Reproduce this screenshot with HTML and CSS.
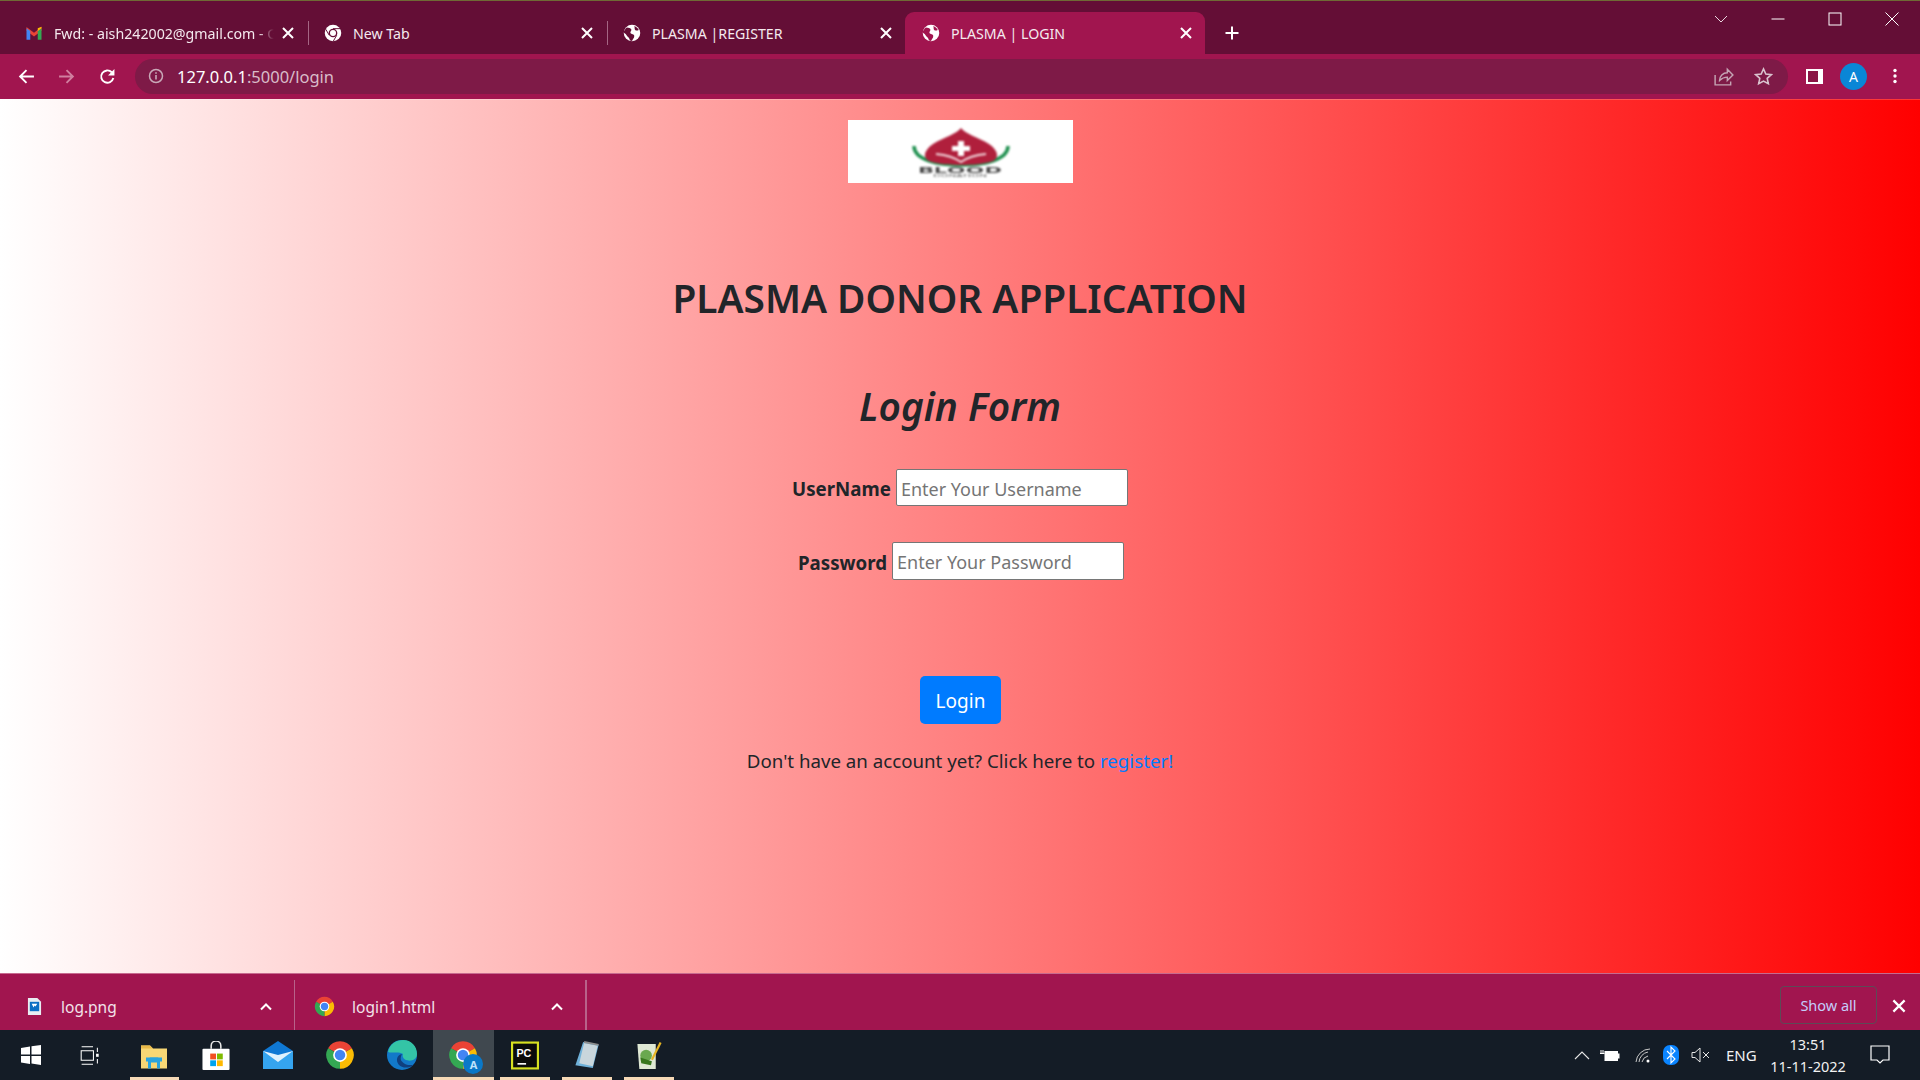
FILE: index.html
```html
<!DOCTYPE html>
<html lang="en">
<head>
<meta charset="utf-8">
<title>PLASMA | LOGIN</title>
<link rel="stylesheet" href="styles.css">
</head>
<body>
<svg class="sprite" width="0" height="0" aria-hidden="true">
  <symbol id="globe" viewBox="0 0 24 24"><circle cx="12" cy="12" r="11" fill="#fff"/><path d="M5 4.500c3 .5 5 .5 6 2.500 1 2-2 3-1 5s5 1 5 4-2 4-3 6.500c-2 0-3-1-3.500-3s-3-3-4-5-3-2-3.500-3.500S3.500 6 5 4.500zM15 2.500c3 1 5 3 6 5.500-2 1-4 1-5-.5s0-3-1-5z" fill="#640e36"/></symbol>
  <symbol id="globea" viewBox="0 0 24 24"><circle cx="12" cy="12" r="11" fill="#fff"/><path d="M5 4.500c3 .5 5 .5 6 2.500 1 2-2 3-1 5s5 1 5 4-2 4-3 6.500c-2 0-3-1-3.500-3s-3-3-4-5-3-2-3.500-3.500S3.500 6 5 4.500zM15 2.500c3 1 5 3 6 5.500-2 1-4 1-5-.5s0-3-1-5z" fill="#a1154f"/></symbol>
  <symbol id="chrome" viewBox="0 0 24 24"><path d="M12 12 2.470 6.500A11 11 0 0 1 21.530 6.500z" fill="#ea4335"/><path d="M12 12 21.530 6.500A11 11 0 0 1 12 23z" fill="#fbbc04"/><path d="M12 12 12 23A11 11 0 0 1 2.470 6.500z" fill="#34a853"/><circle cx="12" cy="12" r="5.500" fill="#fff"/><circle cx="12" cy="12" r="4.200" fill="#4285f4"/></symbol>
  <symbol id="chromewhite" viewBox="0 0 24 24"><circle cx="12" cy="12" r="11" fill="#fff"/><circle cx="12" cy="12" r="5.800" fill="#640e36"/><circle cx="12" cy="12" r="4" fill="#fff"/><path d="M12 6.200h9.500M7 15l-4.700-8M17 15l-5 8.500" stroke="#640e36" stroke-width="1.300"/></symbol>
  <symbol id="x" viewBox="0 0 16 16"><path d="M3 3l10 10M13 3L3 13" stroke="#fff" stroke-width="2" fill="none"/></symbol>
  <symbol id="up" viewBox="0 0 16 16"><path d="M3 10.500l5-5 5 5" stroke="#fff" stroke-width="2" fill="none"/></symbol>
</svg>

<div class="screen">
  <header class="tabstrip">
    <div class="tab">
      <svg class="fav" viewBox="0 0 24 24"><path d="M2 4l10 7.500L22 4v5l-10 7.500L2 9z" fill="#ea4335"/><path d="M2 21V5.500l5 3.800V21z" fill="#4285f4"/><path d="M17 21V9.300l5-3.800V21z" fill="#34a853"/><path d="M17 9.300l5-3.800V3.500l-5 2z" fill="#fbbc04"/></svg>
      <span class="tabtitle fade">Fwd: - aish242002@gmail.com - G</span>
      <svg class="tabx"><use href="#x"/></svg>
      <i class="tabsep"></i>
    </div>
    <div class="tab">
      <svg class="fav"><use href="#chromewhite"/></svg>
      <span class="tabtitle">New Tab</span>
      <svg class="tabx"><use href="#x"/></svg>
      <i class="tabsep"></i>
    </div>
    <div class="tab">
      <svg class="fav"><use href="#globe"/></svg>
      <span class="tabtitle">PLASMA |REGISTER</span>
      <svg class="tabx"><use href="#x"/></svg>
    </div>
    <div class="tab active">
      <svg class="fav"><use href="#globea"/></svg>
      <span class="tabtitle">PLASMA | LOGIN</span>
      <svg class="tabx"><use href="#x"/></svg>
    </div>
    <svg class="newtab" viewBox="0 0 16 16"><path d="M8 1.500v13M1.500 8h13" stroke="#fff" stroke-width="2"/></svg>
    <div class="winctl">
      <svg class="wc" viewBox="0 0 16 16"><path d="M2 5l6 6 6-6" stroke="#e9d6df" stroke-width="1" fill="none"/></svg>
      <svg class="wc" viewBox="0 0 16 16"><path d="M1.500 8h13" stroke="#fff" stroke-width="1"/></svg>
      <svg class="wc" viewBox="0 0 16 16"><rect x="2" y="2" width="12" height="12" stroke="#fff" stroke-width="1" fill="none"/></svg>
      <svg class="wc" viewBox="0 0 16 16"><path d="M1.500 1.500l13 13M14.500 1.500l-13 13" stroke="#fff" stroke-width="1" fill="none"/></svg>
    </div>
  </header>

  <nav class="toolbar">
    <svg class="tb back" viewBox="0 0 16 16"><path d="M15 8H2M8 2L2 8l6 6" stroke="#fff" stroke-width="1.800" fill="none"/></svg>
    <svg class="tb fwd" viewBox="0 0 16 16"><path d="M1 8h13M8 2l6 6-6 6" stroke="#d07f9f" stroke-width="1.800" fill="none"/></svg>
    <svg class="tb reload" viewBox="0 0 16 16"><path d="M13.500 9.500A5.800 5.800 0 1 1 12 4" stroke="#fff" stroke-width="1.800" fill="none"/><path d="M14.500 1v6h-6z" fill="#fff"/></svg>
    <div class="omnibox">
      <svg class="info" viewBox="0 0 16 16"><circle cx="8" cy="8" r="6.500" stroke="#c9a9b8" stroke-width="1.500" fill="none"/><path d="M8 7v4.500M8 4.300v1.500" stroke="#c9a9b8" stroke-width="1.600"/></svg>
      <span class="url"><b>127.0.0.1</b>:5000/login</span>
      <svg class="tb share" viewBox="0 0 18 18"><path d="M1 8v9h14v-3" stroke="#c4a3b3" stroke-width="1.300" fill="none"/><path d="M5 13c0-4 3-7 7-7V3l5 5-5 5v-3c-3 0-5 1-7 3z" stroke="#c4a3b3" stroke-width="1.300" fill="none"/></svg>
      <svg class="tb star" viewBox="0 0 18 18"><path d="M9 1.800l2.200 4.800 5.200.6-3.900 3.500 1.100 5.200L9 13.300l-4.600 2.600 1.100-5.200L1.600 7.200l5.200-.6z" stroke="#d9c3ce" stroke-width="1.500" fill="none"/></svg>
    </div>
    <div class="panel"></div>
    <div class="avatar">A</div>
    <svg class="dots" viewBox="0 0 4 16"><circle cx="2" cy="2.500" r="1.700" fill="#fff"/><circle cx="2" cy="8" r="1.700" fill="#fff"/><circle cx="2" cy="13.500" r="1.700" fill="#fff"/></svg>
  </nav>

  <main class="page">
    <div class="logo">
      <svg class="logomark" viewBox="0 0 225 63">
        <path d="M66 26C66 40 90 45 113 45S160 40 160 26" stroke="#1d8f4e" stroke-width="3.500" fill="none"/>
        <path d="M113 8C117 14 130 17 141 24 151 31 151 38 145 41 135 44.500 125 45 113 45S91 44.500 81 41C75 38 75 31 85 24 96 17 109 14 113 8z" fill="#b01f3c"/>
        <path d="M110 21h6v5h6v5h-6v5h-6v-5h-6v-5h6z" fill="#fff"/>
        <path d="M88 34c10 1 18 3 25 8 7-5 15-7 25-8" stroke="#f3d9de" stroke-width="2" fill="none"/>
        <text class="logotext" x="70" y="52.500" textLength="84" lengthAdjust="spacingAndGlyphs">BLOOD</text>
        <text class="logosub" x="85" y="56.500" textLength="54" lengthAdjust="spacingAndGlyphs">DONATION</text>
      </svg>
    </div>
    <h1 class="title">PLASMA DONOR APPLICATION</h1>
    <h2 class="subtitle">Login Form</h2>
    <form class="form">
      <div class="row"><label class="lbl" for="u">UserName</label><input class="field" id="u" type="text" placeholder="Enter Your Username"></div>
      <div class="row row-pass"><label class="lbl" for="p">Password</label><input class="field" id="p" type="text" placeholder="Enter Your Password"></div>
      <button class="btn" type="button">Login</button>
    </form>
    <p class="foot">Don't have an account yet? Click here to <a class="reg" href="#">register!</a></p>
  </main>

  <section class="downloads">
    <div class="dl">
      <svg class="dlicon" viewBox="0 0 16 20"><path d="M1 1h10l4 4v14H1z" fill="#e8edf2"/><rect x="3" y="5" width="10" height="10" fill="#0d6fc4"/><path d="M5 7h6l-2 3-1-1-1 2z" fill="#fff"/></svg>
      <span class="dlname">log.png</span>
      <svg class="dlup"><use href="#up"/></svg>
    </div>
    <div class="dl">
      <svg class="dlicon wide"><use href="#chrome"/></svg>
      <span class="dlname">login1.html</span>
      <svg class="dlup"><use href="#up"/></svg>
    </div>
    <button class="showall" type="button">Show all</button>
    <svg class="dlx"><use href="#x"/></svg>
  </section>

  <footer class="taskbar">
    <div class="tk"><svg class="tki win" viewBox="0 0 24 24"><path d="M2 5l9-1.500V11.500H2zM12.500 3.300L22 2v9.500h-9.500zM2 13h9v8L2 19.500zM12.500 13H22v9l-9.500-1.500z" fill="#fff"/></svg></div>
    <div class="tk view"><svg class="tki tv" viewBox="0 0 24 24"><path d="M3 2h13M3 22h13M2.500 6.500h14v11h-14zM21 3v5M21 16v5" stroke="#fff" stroke-width="1.200" fill="none"/><rect x="19.500" y="10" width="3" height="3.500" fill="#fff"/></svg></div>
    <div class="tk on"><svg class="tki" viewBox="0 0 28 28"><path d="M1 4h9l3 3h14v20H1z" fill="#f8d775"/><path d="M1 4h9l3 3H1z" fill="#e9b949"/><path d="M8 27v-9l2-2h8l2 2v9h-3v-6h-6v6z" fill="#29a4e0"/><rect x="6" y="16" width="16" height="4" fill="#29a4e0"/></svg></div>
    <div class="tk"><svg class="tki" viewBox="0 0 28 30"><path d="M9 8V5a5 5 0 0 1 10 0v3" stroke="#e8e8e8" stroke-width="1.600" fill="none"/><rect x="0" y="8" width="28" height="22" rx="1" fill="#fff"/><rect x="8" y="13" width="6" height="6" fill="#f25022"/><rect x="15" y="13" width="6" height="6" fill="#7fba00"/><rect x="8" y="20" width="6" height="6" fill="#00a4ef"/><rect x="15" y="20" width="6" height="6" fill="#ffb900"/></svg></div>
    <div class="tk"><svg class="tki big" viewBox="0 0 30 28"><path d="M0 10L15 0l15 10v18H0z" fill="#0f78d4"/><path d="M0 10l15 10 15-10v18H0z" fill="#35a4ef"/><path d="M0 10l15 11L30 10 15 14z" fill="#dff1fd"/></svg></div>
    <div class="tk"><svg class="tki big"><use href="#chrome"/></svg></div>
    <div class="tk"><svg class="tki big" viewBox="0 0 28 28"><circle cx="14" cy="14" r="14" fill="#1279c9"/><path d="M1 11C3 3 9 0 15 0c8 0 13 6 13 13 0 5-5 7-9 6-4-1-5-4-4-6-5-3-11 0-14-2z" fill="#34c4a6"/><path d="M14 13c-5 1-6 6-3 10 3 3 9 4 14 0-4 1-9 0-11-3-2-2-1-5 0-7z" fill="#10407f"/></svg></div>
    <div class="tk on active"><span class="chromea"><svg class="tki big"><use href="#chrome"/></svg><span class="badge">A</span></span></div>
    <div class="tk on"><svg class="tki" viewBox="0 0 26 26"><rect x="1" y="1" width="24" height="24" fill="#0b0b0b" stroke="#d7e021" stroke-width="2"/><rect x="6" y="20" width="8" height="1.500" fill="#fff"/><text class="pc" x="5" y="14">PC</text></svg></div>
    <div class="tk on"><svg class="tki" viewBox="0 0 26 30"><path d="M9 1l16 3-6 24L1 25z" fill="#6fb1d9"/><path d="M10 2l14 3-5 21L5 23z" fill="#c9d6dc"/><path d="M10 1l15 3" stroke="#8d8d8d" stroke-width="2"/></svg></div>
    <div class="tk on"><svg class="tki" viewBox="0 0 26 30"><path d="M1 3h19v26H3z" fill="#dfe8d4"/><circle cx="10" cy="15" r="6" fill="#6aa84f"/><path d="M4 17l12 4-1 4-10-2z" fill="#38761d"/><path d="M24 1l2 1-9 18-2-1z" fill="#e6b422"/></svg></div>
    <div class="tray">
      <svg class="ti chev" viewBox="0 0 16 16"><path d="M1 12l7-7 7 7" stroke="#e6e6e6" stroke-width="1.100" fill="none"/></svg>
      <svg class="ti batt" viewBox="0 0 20 14"><rect x="4.500" y="3" width="13.500" height="10" fill="#fff"/><rect x="18" y="5.500" width="1.500" height="5" fill="#fff"/><path d="M0 5.500h4.500M1 2v3.500M3 2v3.500" stroke="#fff"/></svg>
      <svg class="ti wifi" viewBox="0 0 16 16"><path d="M1 15a14 14 0 0 1 14-13M4 15a11 11 0 0 1 9-10M7 15a8 8 0 0 1 6-6" stroke="#c9c9c9" stroke-width="1" fill="none"/><circle cx="13" cy="14" r="1.500" fill="#fff"/></svg>
      <svg class="ti bt" viewBox="0 0 16 20"><rect width="16" height="20" rx="7" fill="#0a84ff"/><path d="M4 6l8 8-4 4V2l4 4-8 8" stroke="#fff" stroke-width="1.100" fill="none"/></svg>
      <svg class="ti spk" viewBox="0 0 20 16"><path d="M1 5.500h3L9 1v14L4 10.500H1z" stroke="#e6e6e6" fill="none"/><path d="M12 5l6 6M18 5l-6 6" stroke="#e6e6e6"/></svg>
      <span class="eng">ENG</span>
      <div class="clock"><span>13:51</span><span>11-11-2022</span></div>
      <svg class="ti note" viewBox="0 0 20 20"><path d="M1 1h18v14h-6l-3 3-3-3H1z" stroke="#fff" stroke-width="1.200" fill="none"/></svg>
    </div>
  </footer>
</div>
</body>
</html>
```

FILE: styles.css
```css
* { box-sizing: border-box; }
html, body { margin: 0; height: 100%; overflow: hidden; }
body { font-family: "Noto Sans", "Open Sans", "Liberation Sans", sans-serif; }
.sprite { position: absolute; }
.screen { width: 1920px; height: 1080px; display: flex; flex-direction: column; }

/* tab strip */
.tabstrip { height: 54px; background: #640e36; border-top: 1px solid #6f6a35; padding-left: 8px; display: flex; align-items: flex-end; color: #fff; }
.tab { width: 299px; height: 42px; padding: 0 11px 0 17px; display: flex; align-items: center; position: relative; }
.tab.active { width: 300px; background: #a1154f; border-radius: 9px 9px 0 0; }
.fav { width: 18px; height: 18px; flex: none; margin-right: 11px; }
.tabtitle { flex: 1; min-width: 0; font-size: 14.200px; white-space: nowrap; color: #f4e9ee; }
.fade { margin-right: 4px; -webkit-mask-image: linear-gradient(to right, #000 92%, transparent 99%); mask-image: linear-gradient(to right, #000 92%, transparent 99%); }
.tabx { width: 16px; height: 16px; flex: none; }
.tabsep { position: absolute; right: -2px; top: 9px; width: 1px; height: 24px; background: #a56684; }
.newtab { width: 16px; height: 16px; margin: 0 0 13px 19px; }
.winctl { margin-left: auto; align-self: flex-start; display: flex; margin-top: 10px; padding-right: 20px; gap: 41px; }
.wc { width: 16px; height: 16px; }

/* toolbar */
.toolbar { height: 45px; background: #a1154f; display: flex; align-items: center; padding: 0 17px 1px 18px; }
.tb { width: 17px; height: 17px; flex: none; }
.fwd { margin-left: 23px; }
.reload { margin-left: 24px; }
.omnibox { margin-left: 19px; width: 1653px; height: 35px; border-radius: 18px; background: #7e1a47; display: flex; align-items: center; padding: 0 12px 0 13px; }
.info { width: 16px; height: 16px; flex: none; }
.url { flex: 1; margin-left: 13px; font-size: 16.500px; color: #d9bcc9; }
.url b { font-weight: 400; color: #fff; }
.share { width: 20px; height: 20px; margin-right: 20px; }
.star { width: 19px; height: 19px; margin-right: 3px; }
.panel { width: 17px; height: 15px; margin-left: 18px; border: 2px solid #fff; border-right-width: 5px; background: #8a1545; flex: none; }
.avatar { width: 27px; height: 27px; border-radius: 50%; margin-left: 17px; background: #0a86d6; color: #fff; font-size: 14px; display: flex; align-items: center; justify-content: center; flex: none; }
.dots { width: 4px; height: 16px; margin-left: 26px; flex: none; }

/* page */
.page { flex: 1; background: linear-gradient(to right, #fff, #f00); border-top: 1px solid rgba(255,255,255,.2); display: flex; flex-direction: column; align-items: center; padding-top: 20px; color: #212529; }
.logo { width: 225px; height: 63px; background: #fff; flex: none; }
.logomark { width: 225px; height: 63px; display: block; filter: blur(1px); }
.logotext { font-size: 9px; font-weight: 700; fill: #444; }
.logosub { font-size: 4px; fill: #555; }
.title { margin: 91px 0 0; font-size: 38.800px; line-height: 48px; font-weight: 600; }
.subtitle { margin: 60px 0 0; font-size: 38.800px; line-height: 48px; font-weight: 600; font-style: italic; }
.form { margin-top: 39px; display: flex; flex-direction: column; align-items: center; }
.row { display: flex; align-items: center; gap: 5px; }
.row-pass { margin-top: 36px; margin-left: 2px; }
.lbl { font-weight: 700; font-size: 18.700px; position: relative; top: 1px; }
.field { width: 232px; height: 37px; border: 1px solid #767676; border-radius: 2px; padding: 2px 4px 0; background: #fff; font: 400 18px "Noto Sans", sans-serif; }
.row-pass .field { height: 38px; }
.field::placeholder { color: #757575; opacity: 1; }
.btn { margin: 96px 0 0 1px; width: 81px; height: 48px; border: 0; border-radius: 5px; padding-top: 2px; background: #007bff; color: #fff; font: 400 19px "Noto Sans", sans-serif; }
.foot { margin: 22px 0 0; font-size: 18.700px; line-height: 30px; }
.reg { color: #007bff; text-decoration: none; }

/* downloads */
.downloads { height: 57px; background: #a1154f; border-top: 1px solid #c76a8f; display: flex; align-items: flex-end; color: #fff; }
.dl { width: 292px; height: 50px; display: flex; align-items: center; padding: 3px 20px 0 27px; border-right: 1px solid #b8628a; flex: none; }
.dl:first-child { width: 295px; }
.dl:nth-child(2) { border-right-width: 2px; }
.dlicon { width: 15px; height: 19px; flex: none; }
.dlicon.wide { width: 21px; height: 21px; margin-left: -8px; }
.dlname { flex: 1; margin-left: 19px; font-size: 15.500px; color: #f2e3ea; }
.dlicon.wide + .dlname { margin-left: 17px; }
.dlup { width: 16px; height: 16px; flex: none; }
.showall { margin: 0 0 6px auto; width: 97px; height: 38px; padding-bottom: 2px; background: transparent; border: 1px solid #5d4a56; border-radius: 4px; color: #c5cdfb; font: 400 14.500px "Noto Sans", sans-serif; }
.dlx { width: 18px; height: 18px; margin: 0 12px 15px 13px; flex: none; }

/* taskbar */
.taskbar { height: 50px; background: #141c26; display: flex; align-items: stretch; color: #f2f2f2; }
.tk { width: 61.800px; display: flex; align-items: center; justify-content: center; position: relative; flex: none; }
.tk.view { padding-right: 6px; }
.tk.on::after { content: ""; position: absolute; left: 6px; right: 6px; bottom: 0; height: 3px; background: #f6d9b6; }
.tk.active { background: #40484f; }
.tk.active::after { left: 0; right: 0; }
.tki { width: 28px; height: 29px; }
.tki.big { width: 30px; height: 30px; }
.tki.win { width: 24px; height: 24px; }
.tki.tv { width: 21px; height: 21px; }
.chromea { position: relative; display: flex; }
.badge { position: absolute; right: -5px; bottom: -4px; width: 20px; height: 20px; border-radius: 50%; background: #0a78c8; color: #bfe2fb; font-size: 11px; font-weight: 700; display: flex; align-items: center; justify-content: center; }
.pc { font: 700 10px "Liberation Sans", sans-serif; fill: #fff; }
.tray { margin-left: auto; display: flex; align-items: center; padding-right: 30px; }
.ti { width: 16px; height: 16px; flex: none; margin-right: 14px; }
.chev { margin-right: 10px; }
.batt { width: 20px; height: 14px; margin-right: 15px; }
.wifi { margin-right: 12px; }
.bt { height: 20px; margin-right: 12px; }
.spk { width: 20px; margin-right: 15px; }
.eng { font-size: 15px; width: 32px; margin-right: 10px; }
.clock { display: flex; flex-direction: column; align-items: center; font-size: 14.500px; line-height: 22px; width: 80px; margin-right: 22px; }
.note { width: 20px; height: 20px; margin-right: 0; }
```
